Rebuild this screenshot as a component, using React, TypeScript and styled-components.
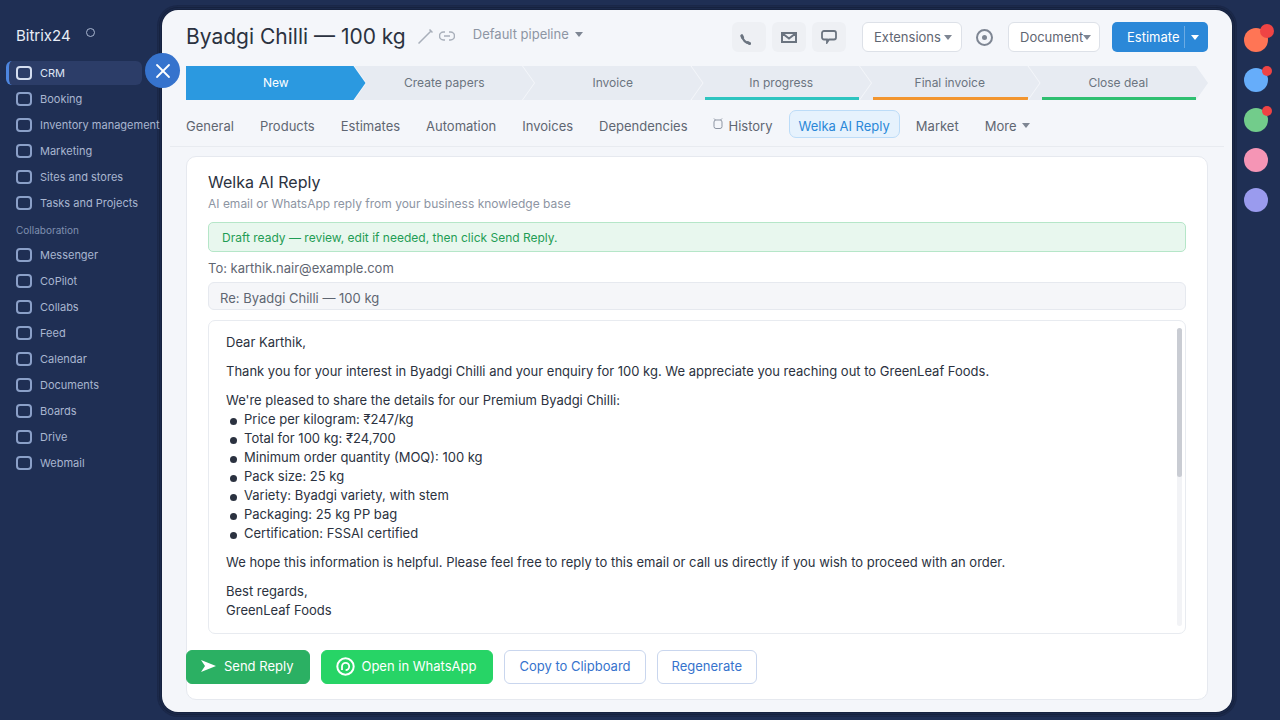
import React from "react"
import styled, {createGlobalStyle} from "styled-components"
import {X} from "lucide-react"

const GlobalStyle = createGlobalStyle`
    html, body {
        margin: 0;
        height: 100%;
        overflow: hidden;
        background: #1f2f54;
        font-family: Inter, "Liberation Sans", sans-serif;
    }
    * { box-sizing: border-box; }
`

const Shell = styled.div`
    display: flex;
    width: 1280px;
    height: 720px;
    background: #1f2f54;
    overflow: hidden;
`

const Sidebar = styled.aside`
    width: 162px;
    flex: none;
    padding-top: 24px;
    position: relative;
    z-index: 2;
    white-space: nowrap;
`

const Brand = styled.div`
    display: flex;
    align-items: flex-start;
    height: 37px;
    padding-left: 16px;
    font-size: 15px;
    line-height: 24px;
    color: #e8edf7;
`

const BrandDot = styled.span`
    width: 9px;
    height: 9px;
    margin: 4px 0 0 15px;
    border: 1px solid #a9b6d0;
    border-radius: 50%;
`

const NavItem = styled.div<{$active?: boolean}>`
    display: flex;
    align-items: center;
    gap: 8px;
    height: 24px;
    margin: 0 0 2px 6px;
    width: 136px;
    padding-left: ${p => p.$active ? 7 : 10}px;
    border-radius: 6px;
    font-size: 11px;
    color: ${p => p.$active ? "#dfe6f5" : "#a9b6d0"};
    background: ${p => p.$active ? "#2c3d68" : "transparent"};
    border-left: ${p => p.$active ? "3px solid #4d86e0" : "none"};
`

const NavIcon = styled.span<{$active?: boolean}>`
    flex: none;
    width: 16px;
    height: 14px;
    border: 2px solid ${p => p.$active ? "#d5def0" : "#8ba0c8"};
    border-radius: 4px;
`

const NavSection = styled.div`
    height: 26px;
    padding: 6px 0 0 16px;
    font-size: 10px;
    line-height: 14px;
    color: #7f8fb0;
`

const CloseButton = styled.button`
    position: absolute;
    left: 145px;
    top: 53px;
    width: 35px;
    height: 35px;
    padding: 0;
    display: flex;
    align-items: center;
    justify-content: center;
    border: none;
    border-radius: 50%;
    background: #3673cd;
    color: #fff;
`

const Panel = styled.main`
    flex: none;
    width: 1070px;
    height: 702px;
    margin-top: 10px;
    padding: 0 14px;
    background: #f4f6fa;
    border-radius: 16px;
    box-shadow: 0 0 0 1px #16223f, 0 0 0 2px #1c2a4b, 0 0 0 3px #16223f, 0 0 0 4px #1c2a4b, 0 0 0 5px #1a2748;
    color: #2b3240;
`

const Header = styled.header`
    display: flex;
    align-items: center;
    height: 56px;
    padding: 0 10px 2px;
`

const Title = styled.h1`
    margin: 0;
    font-size: 21px;
    line-height: 30px;
    font-weight: 400;
    color: #2b3240;
`

const TitleIcons = styled.div`
    display: flex;
    align-items: center;
    gap: 6px;
    margin: 0 0 2px 12px;
    color: #a8afba;
`

const Pipeline = styled.div`
    display: flex;
    align-items: center;
    gap: 6px;
    margin: 0 auto 6px 18px;
    font-size: 13px;
    color: #8d95a3;
`

const Caret = styled.span<{$color?: string; $gap?: number}>`
    flex: none;
    width: 0;
    height: 0;
    margin-left: ${p => p.$gap ?? 0}px;
    border-left: 4px solid transparent;
    border-right: 4px solid transparent;
    border-top: 5px solid ${p => p.$color ?? "#7e8693"};
`

const IconButton = styled.button`
    width: 34px;
    height: 30px;
    padding: 0;
    margin-right: 6px;
    display: flex;
    align-items: center;
    justify-content: center;
    border: none;
    border-radius: 6px;
    background: #eef0f4;
    color: #6b7480;
`

const PhoneGlyph = styled.svg`
    margin: 4px 8px 0 0;
`

const OutlineSelect = styled.div<{$width: number; $offset?: number}>`
    width: ${p => p.$width}px;
    height: 30px;
    margin-left: ${p => p.$offset ?? 0}px;
    display: flex;
    align-items: center;
    padding-left: 11px;
    background: #fff;
    border: 1px solid #dde1e8;
    border-radius: 6px;
    font-size: 13px;
    color: #5f6672;
`

const Gear = styled.span`
    width: 17px;
    height: 17px;
    margin: 0 15px 0 14px;
    border: 2px solid #7e8693;
    border-radius: 50%;
    display: flex;
    align-items: center;
    justify-content: center;
    &::after {
        content: "";
        width: 5px;
        height: 5px;
        border-radius: 50%;
        background: #7e8693;
    }
`

const Estimate = styled.div`
    display: flex;
    align-items: center;
    width: 96px;
    height: 30px;
    margin-left: 12px;
    padding-left: 15px;
    border-radius: 5px;
    background: #2b88d8;
    color: #fff;
    font-size: 13px;
`

const EstimateDivider = styled.span`
    width: 1px;
    height: 22px;
    margin: 0 6px 0 5px;
    background: #6cabe3;
`

const Stages = styled.div`
    display: flex;
    height: 34px;
    margin: 0 10px;
`

const Stage = styled.div<{$bar?: string; $active?: boolean; $first?: boolean}>`
    position: relative;
    flex: 1;
    display: flex;
    align-items: center;
    justify-content: center;
    padding-bottom: 2px;
    margin-left: ${p => p.$first ? 0 : -11}px;
    font-size: 12px;
    background: ${p => p.$active ? "#2b99e0" : "#e7ebf2"};
    color: ${p => p.$active ? "#fff" : "#6b7480"};
    clip-path: ${p => p.$first
        ? "polygon(0 0, calc(100% - 12px) 0, 100% 50%, calc(100% - 12px) 100%, 0 100%)"
        : "polygon(0 0, calc(100% - 12px) 0, 100% 50%, calc(100% - 12px) 100%, 0 100%, 12px 50%)"};
    &::after {
        content: "";
        display: ${p => p.$bar ? "block" : "none"};
        position: absolute;
        left: 13px;
        right: 12px;
        bottom: 0;
        height: 3px;
        background: ${p => p.$bar};
    }
`

const Tabs = styled.nav`
    display: flex;
    align-items: flex-start;
    gap: 6px;
    height: 47px;
    margin: 0 -6px;
    padding: 10px 0 0 6px;
    border-bottom: 1px solid #e8ebf0;
`

const Tab = styled.div<{$active?: boolean}>`
    display: flex;
    align-items: center;
    gap: 6px;
    height: 28px;
    padding: 3px 9px 0;
    border: 1px solid ${p => p.$active ? "#bcdcf8" : "transparent"};
    border-radius: 7px;
    background: ${p => p.$active ? "#e6f2fd" : "transparent"};
    color: ${p => p.$active ? "#2b88d8" : "#5f6672"};
    font-size: 13px;
`

const HistoryGlyph = styled.svg`
    margin: -5px 0 0 -1px;
`

const Card = styled.section`
    display: flex;
    flex-direction: column;
    height: 544px;
    margin: 9px 10px 0;
    padding: 14px 21px 0;
    background: #fff;
    border: 1px solid #e6e9ef;
    border-radius: 10px;
`

const CardTitle = styled.h2`
    margin: 0;
    font-size: 16px;
    line-height: 22px;
    font-weight: 400;
    color: #2b3240;
`

const CardSubtitle = styled.p`
    margin: 2px 0 0;
    font-size: 12px;
    line-height: 18px;
    color: #8d95a3;
`

const Notice = styled.div`
    height: 30px;
    margin-top: 9px;
    padding-left: 13px;
    display: flex;
    align-items: center;
    background: #e8f7ee;
    border: 1px solid #b5e6c8;
    border-radius: 5px;
    font-size: 12px;
    color: #1f9d55;
`

const ToLine = styled.div`
    margin-top: 6px;
    font-size: 13px;
    line-height: 20px;
    color: #5f6672;
`

const Subject = styled.div`
    height: 28px;
    margin-top: 4px;
    padding: 3px 0 0 11px;
    display: flex;
    align-items: center;
    background: #f5f6f9;
    border: 1px solid #e6e9ef;
    border-radius: 6px;
    font-size: 13px;
    color: #5f6672;
`

const Body = styled.div`
    position: relative;
    height: 314px;
    margin-top: 10px;
    padding: 12px 17px;
    border: 1px solid #e8ebf0;
    border-radius: 7px;
    font-size: 13px;
    line-height: 19px;
    color: #2b3240;
`

const Para = styled.p<{$tight?: boolean}>`
    margin: 0 0 ${p => p.$tight ? 0 : 10}px;
`

const Bullets = styled.ul`
    margin: 0 0 10px;
    padding: 0;
    list-style: none;
`

const Bullet = styled.li`
    display: flex;
    align-items: center;
    gap: 7px;
    &::before {
        content: "";
        width: 7px;
        height: 7px;
        margin: 3px 0 0 4px;
        border-radius: 50%;
        background: #2b3240;
    }
`

const ScrollTrack = styled.div`
    position: absolute;
    top: 7px;
    right: 3px;
    bottom: 7px;
    width: 5px;
    border-radius: 3px;
    background: #f2f3f6;
`

const ScrollThumb = styled.div`
    height: 149px;
    border-radius: 3px;
    background: #c9ccd3;
`

const Actions = styled.div`
    display: flex;
    gap: 11px;
    margin: 16px 0 0 -22px;
`

const ActionButton = styled.button<{$bg?: string; $gap?: number}>`
    display: flex;
    align-items: center;
    gap: ${p => p.$gap ?? 8}px;
    height: 34px;
    padding: 0 ${p => p.$bg ? 16 : 14}px 2px 14px;
    font-family: inherit;
    font-size: 13px;
    border-radius: 6px;
    border: 1px solid ${p => p.$bg ?? "#c9d6ee"};
    background: ${p => p.$bg ?? "#fff"};
    color: ${p => p.$bg ? "#fff" : "#3673cd"};
`

const Rail = styled.aside`
    flex: 1;
    display: flex;
    flex-direction: column;
    align-items: center;
    gap: 16px;
    padding-top: 28px;
`

const RailDot = styled.div<{$color: string; $badge?: number}>`
    position: relative;
    width: 24px;
    height: 24px;
    border-radius: 50%;
    background: ${p => p.$color};
    &::after {
        content: "";
        display: ${p => p.$badge ? "block" : "none"};
        position: absolute;
        top: ${p => p.$badge === 14 ? -4 : -2}px;
        right: ${p => p.$badge === 14 ? -6 : -4}px;
        width: ${p => p.$badge}px;
        height: ${p => p.$badge}px;
        border-radius: 50%;
        background: #ef4444;
    }
`

const mainNav = ["Booking", "Inventory management", "Marketing", "Sites and stores", "Tasks and Projects"]
const collabNav = ["Messenger", "CoPilot", "Collabs", "Feed", "Calendar", "Documents", "Boards", "Drive", "Webmail"]
const stages = [
    {label: "New", active: true},
    {label: "Create papers"},
    {label: "Invoice"},
    {label: "In progress", bar: "#2ec4c0"},
    {label: "Final invoice", bar: "#f2952f"},
    {label: "Close deal", bar: "#2fbf71"},
]
const details = [
    "Price per kilogram: ₹247/kg",
    "Total for 100 kg: ₹24,700",
    "Minimum order quantity (MOQ): 100 kg",
    "Pack size: 25 kg",
    "Variety: Byadgi variety, with stem",
    "Packaging: 25 kg PP bag",
    "Certification: FSSAI certified",
]
const railDots = [
    {color: "#ff7555", badge: 14},
    {color: "#66adfa", badge: 10},
    {color: "#72cc8b", badge: 10},
    {color: "#f595b5"},
    {color: "#9a9bee"},
]

const App: React.FC = () => (
    <Shell>
        <GlobalStyle />
        <Sidebar>
            <Brand>Bitrix24<BrandDot /></Brand>
            <NavItem $active><NavIcon $active />CRM</NavItem>
            {mainNav.map(n => <NavItem key={n}><NavIcon />{n}</NavItem>)}
            <NavSection>Collaboration</NavSection>
            {collabNav.map(n => <NavItem key={n}><NavIcon />{n}</NavItem>)}
            <CloseButton><X size={24} strokeWidth={1.8} /></CloseButton>
        </Sidebar>
        <Panel>
            <Header>
                <Title>Byadgi Chilli — 100 kg</Title>
                <TitleIcons>
                    <svg width="15" height="15" viewBox="0 0 15 15" fill="none" stroke="currentColor" strokeWidth="1.5">
                        <path d="M0.5 14.5 12.500 2.500M11.500 0.500l3 3" />
                    </svg>
                    <svg width="16" height="10" viewBox="0 0 16 10" fill="none" stroke="currentColor" strokeWidth="1.5">
                        <path d="M6 1H4.500a4 4 0 0 0 0 8H6M10 1h1.500a4 4 0 0 1 0 8H10M5 5h6" />
                    </svg>
                </TitleIcons>
                <Pipeline>Default pipeline<Caret /></Pipeline>
                <IconButton>
                    <PhoneGlyph width="11" height="11" viewBox="0 0 11 11" fill="none" stroke="currentColor" strokeLinecap="round">
                        <path d="M2 1.500C2.500 5 5 8.500 9.500 9.500" strokeWidth="2" />
                        <path d="M1.800 1.800 2.600 3.600M7.800 8.500l1.800 1" strokeWidth="3" />
                    </PhoneGlyph>
                </IconButton>
                <IconButton>
                    <svg width="16" height="11" viewBox="0 0 16 11" fill="none" stroke="currentColor" strokeWidth="2">
                        <path d="M1 1h14v9H1zM1.500 1.500 8 6.500l6.500-5" />
                    </svg>
                </IconButton>
                <IconButton>
                    <svg width="16" height="14" viewBox="0 0 16 14" fill="none" stroke="currentColor" strokeWidth="1.8">
                        <path d="M3 1h10a2 2 0 0 1 2 2v4.500a2 2 0 0 1-2 2H8l-2 3v-3H3a2 2 0 0 1-2-2V3a2 2 0 0 1 2-2Z" />
                    </svg>
                </IconButton>
                <OutlineSelect $width={100} $offset={10}>Extensions<Caret $gap={3} /></OutlineSelect>
                <Gear />
                <OutlineSelect $width={92}>Document<Caret /></OutlineSelect>
                <Estimate>Estimate<EstimateDivider /><Caret $color="#fff" /></Estimate>
            </Header>
            <Stages>
                {stages.map((s, i) => (
                    <Stage key={s.label} $first={i === 0} $active={s.active} $bar={s.bar}>{s.label}</Stage>
                ))}
            </Stages>
            <Tabs>
                <Tab>General</Tab>
                <Tab>Products</Tab>
                <Tab>Estimates</Tab>
                <Tab>Automation</Tab>
                <Tab>Invoices</Tab>
                <Tab>Dependencies</Tab>
                <Tab>
                    <HistoryGlyph width="10" height="11" viewBox="0 0 10 11" fill="none" stroke="#8d95a3" strokeWidth="1">
                        <rect x="1" y="2" width="8" height="8.500" rx="2" />
                        <path d="M1 0.500l1.500 1.500M9 0.500 7.500 2" />
                    </HistoryGlyph>
                    History
                </Tab>
                <Tab $active>Welka AI Reply</Tab>
                <Tab>Market</Tab>
                <Tab>More<Caret /></Tab>
            </Tabs>
            <Card>
                <CardTitle>Welka AI Reply</CardTitle>
                <CardSubtitle>AI email or WhatsApp reply from your business knowledge base</CardSubtitle>
                <Notice>Draft ready — review, edit if needed, then click Send Reply.</Notice>
                <ToLine>To: karthik.nair@example.com</ToLine>
                <Subject>Re: Byadgi Chilli — 100 kg</Subject>
                <Body>
                    <Para>Dear Karthik,</Para>
                    <Para>Thank you for your interest in Byadgi Chilli and your enquiry for 100 kg. We appreciate you reaching out to GreenLeaf Foods.</Para>
                    <Para $tight>We're pleased to share the details for our Premium Byadgi Chilli:</Para>
                    <Bullets>
                        {details.map(d => <Bullet key={d}>{d}</Bullet>)}
                    </Bullets>
                    <Para>We hope this information is helpful. Please feel free to reply to this email or call us directly if you wish to proceed with an order.</Para>
                    <Para>Best regards,<br />GreenLeaf Foods</Para>
                    <ScrollTrack><ScrollThumb /></ScrollTrack>
                </Body>
                <Actions>
                    <ActionButton $bg="#2bb063">
                        <svg width="15" height="12" viewBox="0 0 15 12" fill="#fff"><path d="M0 0 15 6 0 12 4 6Z" /></svg>
                        Send Reply
                    </ActionButton>
                    <ActionButton $bg="#27d466" $gap={6}>
                        <svg width="19" height="19" viewBox="0 0 19 19" fill="none" stroke="#fff">
                            <circle cx="9.500" cy="9.500" r="8.200" strokeWidth="2" />
                            <path d="M6 13V9.500a3.600 3.600 0 1 1 3.600 3.600" strokeWidth="1.800" />
                        </svg>
                        Open in WhatsApp
                    </ActionButton>
                    <ActionButton>Copy to Clipboard</ActionButton>
                    <ActionButton>Regenerate</ActionButton>
                </Actions>
            </Card>
        </Panel>
        <Rail>
            {railDots.map(d => <RailDot key={d.color} $color={d.color} $badge={d.badge} />)}
        </Rail>
    </Shell>
)

export default App
